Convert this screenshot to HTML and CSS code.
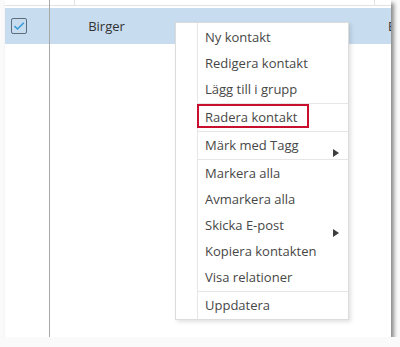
FILE: index.html
```
<!DOCTYPE html>
<html lang="sv">
  <head>
    <meta charset="UTF-8" />
    <title>Kontakter</title>
    <link rel="stylesheet" href="styles.css">
  </head>
  <body>
    <div class="frame">
      <div class="col-check">
        <div class="head"></div>
        <div class="row">
          <span class="checkbox">
            <svg width="12" height="10" viewBox="0 0 12 10">
              <path d="M1.5 5.2 L4.5 8 L10.8 1.8" fill="none" stroke="#3a9bd8" stroke-width="1.6" />
            </svg>
          </span>
        </div>
      </div>
      <div class="col-main">
        <div class="head">
          <div class="head-cell narrow"></div>
          <div class="head-cell wide"></div>
          <div class="head-cell"></div>
        </div>
        <div class="row">
          <div class="cell name">Birger</div>
          <div class="cell fill"></div>
          <div class="cell last">E</div>
        </div>
      </div>

      <div class="context-menu">
        <div class="item">Ny kontakt</div>
        <div class="item">Redigera kontakt</div>
        <div class="item">Lägg till i grupp</div>
        <div class="separator"></div>
        <div class="item marked">Radera kontakt<span class="mark"></span></div>
        <div class="separator"></div>
        <div class="item">Märk med Tagg<span class="arrow"></span></div>
        <div class="separator"></div>
        <div class="item">Markera alla</div>
        <div class="item">Avmarkera alla</div>
        <div class="item">Skicka E-post<span class="arrow"></span></div>
        <div class="item">Kopiera kontakten</div>
        <div class="item">Visa relationer</div>
        <div class="separator"></div>
        <div class="item">Uppdatera</div>
      </div>
    </div>
  </body>
</html>
```

FILE: styles.css
```
body {
  margin: 0;
  background: #fafafa;
  font-family: "Open Sans", "Liberation Sans", sans-serif;
  font-size: 13px;
  color: #474747;
}

.frame {
  position: relative;
  margin-left: 5px;
  width: 386px;
  height: 337px;
  background: white;
  display: flex;
  overflow: hidden;
  box-shadow: 3px 3px 4px rgba(0, 0, 0, 0.45);
}

.col-check {
  width: 44px;
  border-right: 1px solid #a8a8a8;
  flex-shrink: 0;
}

.col-main {
  flex: 1;
  min-width: 0;
}

.head {
  height: 5px;
  border-bottom: 1px solid #e2e2e2;
  margin-bottom: 2px;
  display: flex;
}

.head-cell {
  height: 5px;
}

.head-cell.narrow {
  width: 24px;
  border-right: 1px solid #e2e2e2;
}

.head-cell.wide {
  width: 299px;
  border-right: 1px solid #e2e2e2;
}

.row {
  height: 36px;
  background-color: #c7dcee;
  display: flex;
  align-items: center;
}

.col-check .row {
  padding-left: 6px;
}

.checkbox {
  width: 14px;
  height: 14px;
  border: 1px solid #5d6d7c;
  border-radius: 2px;
  display: flex;
  align-items: center;
  justify-content: center;
}

.cell {
  white-space: nowrap;
}

.cell.name {
  width: 113px;
  text-align: center;
  color: #333;
}

.cell.fill {
  flex: 1;
}

.cell.last {
  width: 3px;
  color: #333;
}

.context-menu {
  position: absolute;
  left: 170px;
  top: 22px;
  width: 172px;
  padding: 1px 0;
  background: white;
  border: 1px solid #dcdcdc;
  box-shadow: 2px 2px 4px rgba(0, 0, 0, 0.12);
}

.context-menu::before {
  content: "";
  position: absolute;
  left: 21px;
  top: 0;
  bottom: 0;
  border-left: 1px solid #e6e6e6;
}

.item {
  position: relative;
  height: 26px;
  line-height: 26px;
  padding-left: 29px;
  white-space: nowrap;
}

.separator {
  height: 1px;
  margin: 1px 0 0 21px;
  background: #e6e6e6;
}

.mark {
  position: absolute;
  left: 21px;
  top: 0;
  width: 108px;
  height: 20px;
  border: 2px solid #c8102e;
}

.arrow {
  position: absolute;
  right: 9px;
  top: 17px;
  width: 0;
  height: 0;
  border-left: 6px solid #3c3c3c;
  border-top: 4px solid transparent;
  border-bottom: 4px solid transparent;
}
```
